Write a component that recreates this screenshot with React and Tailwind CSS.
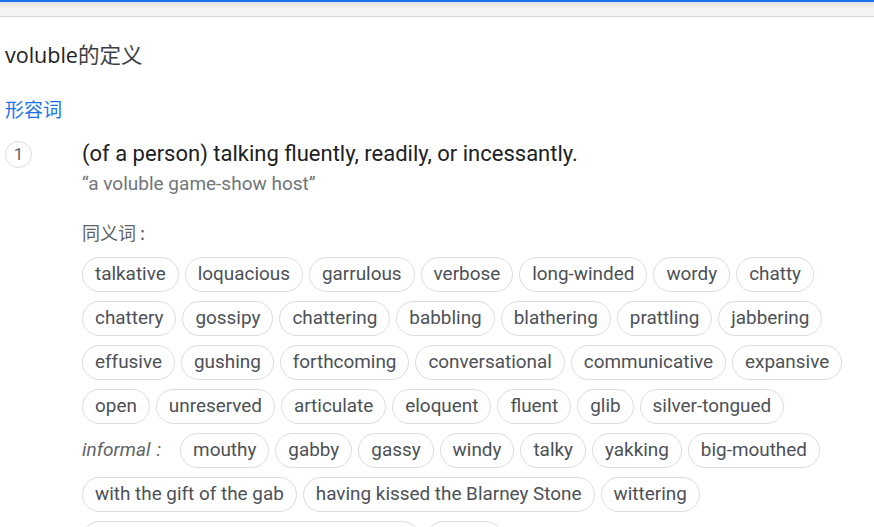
import React from "react";

const rows = [
  ["talkative", "loquacious", "garrulous", "verbose", "long-winded", "wordy", "chatty"],
  ["chattery", "gossipy", "chattering", "babbling", "blathering", "prattling", "jabbering"],
  ["effusive", "gushing", "forthcoming", "conversational", "communicative", "expansive"],
  ["open", "unreserved", "articulate", "eloquent", "fluent", "glib", "silver-tongued"],
];
const informal = ["mouthy", "gabby", "gassy", "windy", "talky", "yakking", "big-mouthed"];
const rest = [
  ["with the gift of the gab", "having kissed the Blarney Stone", "wittering"],
  ["able to talk the hind legs off a donkey", "motor"],
];

function Chip({ children }) {
  return (
    <span className="inline-flex h-[35px] items-center rounded-full border border-[#dadce0] px-[12px] text-[18.9px] text-[#4d5156] whitespace-nowrap">
      {children}
    </span>
  );
}

export default function App() {
  return (
    <div
      className="w-[874px] h-[527px] overflow-hidden bg-white"
      style={{ fontFamily: "Roboto, 'Noto Sans CJK SC', sans-serif" }}
    >
      <div className="h-[2px] bg-[#1a73e8]" />
      <div className="h-[15px] bg-gradient-to-b from-[#e2e2e2] via-[#f4f4f4] to-[#f4f4f4] border-b border-[#d7d7dc]" />
      <div className="pl-[5px]">
        <div
          className="mt-[24px] text-[21.5px] leading-[28px] text-[#202124]"
          style={{ fontFamily: "'Open Sans', 'Noto Sans CJK SC', sans-serif" }}
        >
          voluble<span className="text-[#3c4043]">的定义</span>
        </div>
        <div
          className="mt-[28px] text-[19px] leading-[24px] text-[#1a73e8]"
          style={{ fontFamily: "'Noto Sans CJK SC', sans-serif" }}
        >
          形容词
        </div>
        <div className="mt-[20px] flex">
          <div className="w-[27px] h-[27px] shrink-0 rounded-full border border-[#dadce0] flex items-center justify-center text-[17px] text-[#5f6368]">
            1
          </div>
          <div className="ml-[50px] flex-1">
            <div className="text-[22px] leading-[26px] text-[#202124]">
              (of a person) talking fluently, readily, or incessantly.
            </div>
            <div className="mt-[5px] text-[19px] leading-[24px] text-[#70757a]">
              “a voluble game-show host”
            </div>
            <div
              className="mt-[24px] text-[18px] leading-[24px] text-[#5f6368]"
              style={{ fontFamily: "'Noto Sans CJK SC', sans-serif" }}
            >
              同义词<span className="ml-[4px]">:</span>
            </div>
            <div className="mt-[13px] flex flex-col gap-[9px]">
              {rows.map((r, i) => (
                <div key={i} className="flex gap-[6px]">
                  {r.map((w) => (
                    <Chip key={w}>{w}</Chip>
                  ))}
                </div>
              ))}
              <div className="flex gap-[6px] items-center">
                <span className="italic text-[19px] text-[#5f6368] mr-[13px]">
                  informal<span className="ml-[6px]">:</span>
                </span>
                {informal.map((w) => (
                  <Chip key={w}>{w}</Chip>
                ))}
              </div>
              {rest.map((r, i) => (
                <div key={i} className="flex gap-[6px]">
                  {r.map((w) => (
                    <Chip key={w}>{w}</Chip>
                  ))}
                </div>
              ))}
            </div>
          </div>
        </div>
      </div>
    </div>
  );
}
